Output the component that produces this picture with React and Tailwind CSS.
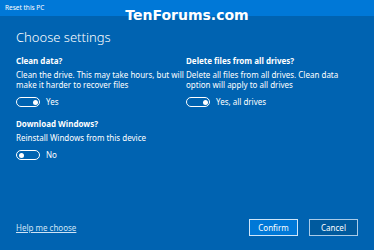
import React from 'react';

const Toggle = ({ on, label }) => (
  <div className="flex items-center gap-[6px] mt-[7px]">
    <div className={`w-[24px] h-[10px] rounded-full border-[1.5px] border-white flex items-center px-[1.5px] ${on ? 'justify-end' : 'justify-start'}`}>
      <div className="w-[5px] h-[5px] rounded-full bg-white" />
    </div>
    <span className="text-[8px] leading-[10px] text-white">{label}</span>
  </div>
);

const Option = ({ title, lines, on, label, className = '' }) => (
  <div className={className}>
    <h3 className="text-[8px] leading-[12px] font-bold text-white">{title}</h3>
    <p className="mt-[3px] text-[8px] leading-[10px] text-white">
      {lines.map((l, i) => (
        <span key={i} className="block whitespace-nowrap">{l}</span>
      ))}
    </p>
    <Toggle on={on} label={label} />
  </div>
);

export default function App() {
  return (
    <div
      className="relative w-[374px] h-[250px] bg-[#0063b1] flex flex-col overflow-hidden"
      style={{ fontFamily: '"Noto Sans", "Open Sans", sans-serif' }}
    >
      <div className="h-[16px] bg-[#0078d7] flex items-center px-[5px]">
        <span className="text-[6.5px] leading-none text-white">Reset this PC</span>
      </div>

      {/* watermark */}
      <div
        className="absolute top-[7px] left-0 right-0 text-center text-[14px] leading-[16px] font-bold text-white"
        style={{ fontFamily: '"DejaVu Sans", Verdana, sans-serif' }}
      >
        TenForums.com
      </div>

      <div className="flex-1 px-[16px] flex flex-col">
        <h1 className="mt-[11px] text-[13px] leading-[20px] text-white font-light">Choose settings</h1>

        <div className="mt-[8px] grid grid-cols-[170px_1fr]">
          <Option
            title="Clean data?"
            lines={['Clean the drive. This may take hours, but will', 'make it harder to recover files']}
            on
            label="Yes"
          />
          <Option
            title="Delete files from all drives?"
            lines={['Delete all files from all drives. Clean data', 'option will apply to all drives']}
            on
            label="Yes, all drives"
          />
          <Option
            className="mt-[11px]"
            title="Download Windows?"
            lines={['Reinstall Windows from this device']}
            on={false}
            label="No"
          />
        </div>

        <div className="mt-auto mb-[14px] flex items-center justify-between">
          <a className="text-[8px] leading-[12px] text-[#cfe3f5] underline">Help me choose</a>
          <div className="flex gap-[11px]">
            <button className="w-[49px] h-[17px] bg-[#0078d7] border border-[#cfe6fa] text-white text-[8px] leading-none">Confirm</button>
            <button className="w-[49px] h-[17px] bg-[#005a9e] border border-[#a9cbe8] text-white text-[8px] leading-none">Cancel</button>
          </div>
        </div>
      </div>
    </div>
  );
}
